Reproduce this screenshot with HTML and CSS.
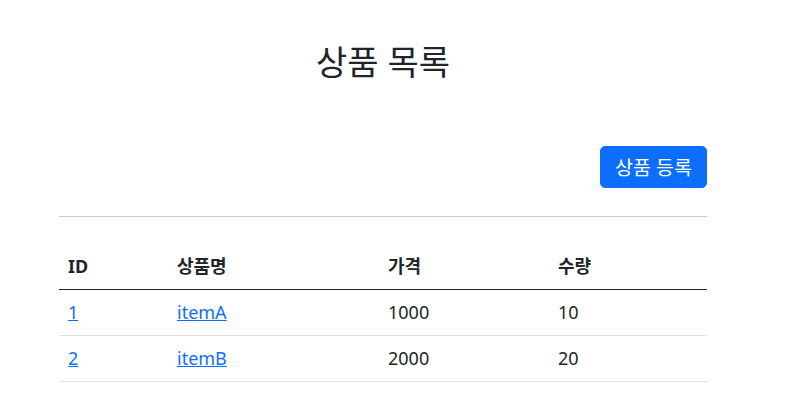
FILE: index.html
```html
<!DOCTYPE html>
<html lang="ko">
<head>
<meta charset="utf-8">
<title>상품 목록</title>
<link rel="stylesheet" href="styles.css">
</head>
<body>
<div class="container">
  <div class="header">
    <h2 class="title">상품 목록</h2>
  </div>
  <div class="actions">
    <button class="btn-primary" type="button">상품 등록</button>
  </div>
  <hr class="divider">
  <table class="table">
    <thead>
      <tr>
        <th class="c-id">ID</th>
        <th class="c-name">상품명</th>
        <th class="c-price">가격</th>
        <th class="c-qty">수량</th>
      </tr>
    </thead>
    <tbody>
      <tr>
        <td><a href="#">1</a></td>
        <td><a href="#">itemA</a></td>
        <td>1000</td>
        <td>10</td>
      </tr>
      <tr>
        <td><a href="#">2</a></td>
        <td><a href="#">itemB</a></td>
        <td>2000</td>
        <td>20</td>
      </tr>
    </tbody>
  </table>
</div>
</body>
</html>
```

FILE: styles.css
```css
html, body {
  margin: 0;
  padding: 0;
  background: #fff;
}
body {
  font-family: "Noto Sans", "Noto Sans CJK KR", sans-serif;
  font-size: 18px;
  line-height: 1.5;
  color: #212529;
}
.container {
  width: 648px;
  margin: 0 0 0 59px;
}
.header {
  text-align: center;
  padding-top: 43px;
  padding-bottom: 47px;
}
.title {
  margin: 0;
  font-size: 34px;
  font-weight: 400;
  line-height: 38px;
}
.actions {
  display: flex;
  justify-content: flex-end;
  padding-top: 18px;
}
.btn-primary {
  font-family: inherit;
  font-size: 19.5px;
  line-height: 27px;
  color: #fff;
  background: #0d6efd;
  border: 1px solid #0d6efd;
  border-radius: 5px;
  padding: 6px 10px;
  height: 42px;
  width: 107px;
  cursor: pointer;
}
.divider {
  margin: 28px 0 27px;
  border: 0;
  border-top: 1px solid #c9cacb;
  height: 0;
}
.table {
  width: 100%;
  border-collapse: collapse;
}
.table th, .table td {
  text-align: left;
  padding: 9px 9px;
  line-height: 27px;
  vertical-align: top;
}
.table th {
  font-weight: 700;
  border-bottom: 1px solid #212529;
}
.table td {
  border-bottom: 1px solid #dee2e6;
}
.c-id { width: 91px; }
.c-name { width: 193px; }
.c-price { width: 152px; }
.table a {
  color: #0d6efd;
  text-decoration: underline;
}
```
